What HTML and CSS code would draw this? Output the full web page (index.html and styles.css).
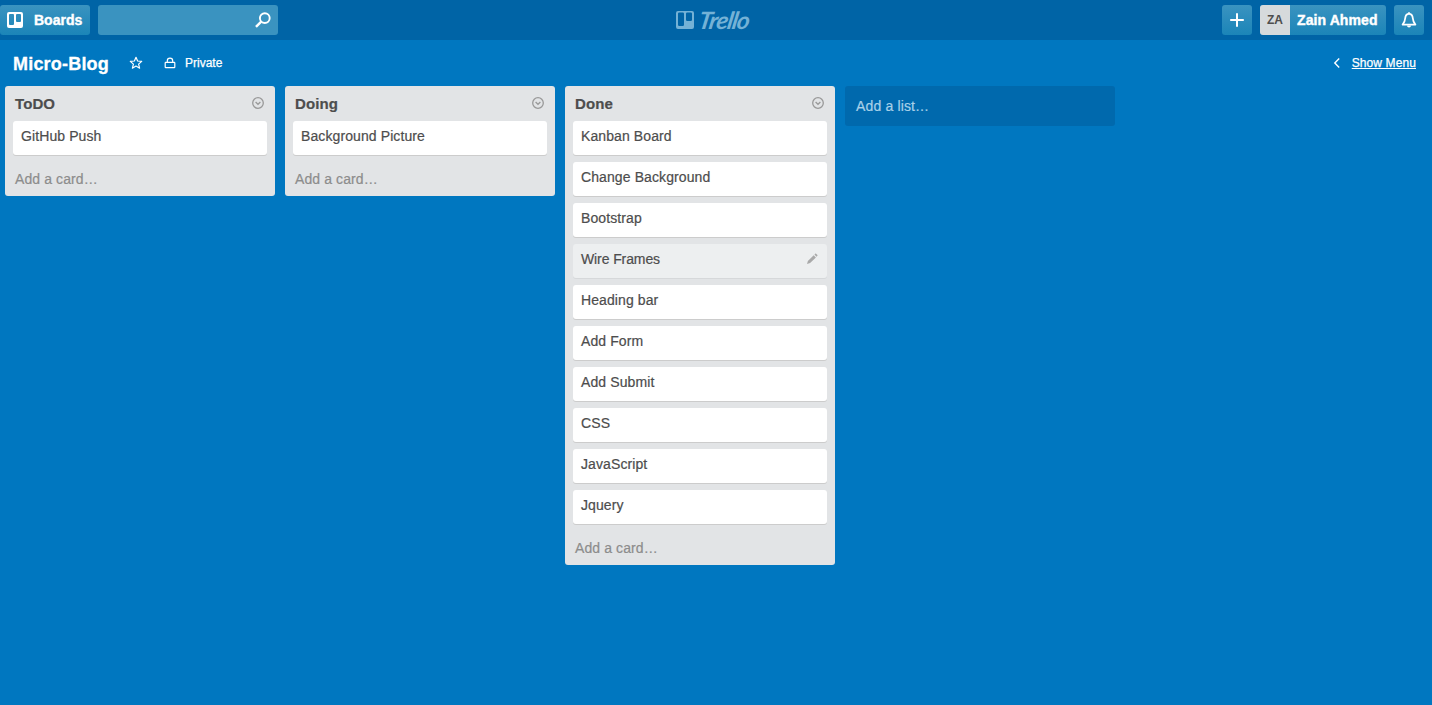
FILE: index.html
```html
<!DOCTYPE html>
<html lang="en">
<head>
<meta charset="utf-8">
<title>Micro-Blog | Trello</title>
<link rel="stylesheet" href="styles.css">
</head>
<body>
<header class="header">
  <div class="header-side">
    <a class="btn boards-btn">
      <svg width="16" height="16" viewBox="0 0 16 16"><path fill="#fff" fill-rule="evenodd" d="M2 0h12a2 2 0 0 1 2 2v12a2 2 0 0 1-2 2H2a2 2 0 0 1-2-2V2a2 2 0 0 1 2-2zM3 2a1 1 0 0 0-1 1v9a1 1 0 0 0 1 1h3a1 1 0 0 0 1-1V3a1 1 0 0 0-1-1zM10 2a1 1 0 0 0-1 1v6a1 1 0 0 0 1 1h3a1 1 0 0 0 1-1V3a1 1 0 0 0-1-1z"/></svg>
      <span class="boards-label">Boards</span>
    </a>
    <div class="search">
      <svg width="16" height="16" viewBox="0 0 16 16" fill="none" stroke="#fff"><circle cx="9.8" cy="6.1" r="4.9" stroke-width="1.9"/><path d="M6.2 9.7L1 14.9" stroke-width="2.4"/></svg>
    </div>
  </div>
  <a class="logo">
    <svg width="18" height="18" viewBox="0 0 18 18"><path fill="#74b2d6" fill-rule="evenodd" d="M2 0h14a2 2 0 0 1 2 2v14a2 2 0 0 1-2 2H2a2 2 0 0 1-2-2V2a2 2 0 0 1 2-2zM3.2 1.5a1.2 1.2 0 0 0-1.2 1.2v11.1a1.2 1.2 0 0 0 1.2 1.2h3.6a1.2 1.2 0 0 0 1.2-1.2V2.7a1.2 1.2 0 0 0-1.2-1.2zM11.2 1.5a1.2 1.2 0 0 0-1.2 1.2v6.1a1.2 1.2 0 0 0 1.2 1.2h3.6a1.2 1.2 0 0 0 1.2-1.2V2.7a1.2 1.2 0 0 0-1.2-1.2z"/></svg>
    <span class="logo-text">Trello</span>
  </a>
  <div class="header-side header-right">
    <a class="btn icon-btn"><svg width="14" height="14" viewBox="0 0 14 14" stroke="#fff" stroke-width="2"><path d="M7 .2v13.6M.2 7h13.6"/></svg></a>
    <a class="btn member"><span class="avatar">ZA</span><span class="member-name">Zain Ahmed</span></a>
    <a class="btn icon-btn"><svg width="16" height="18" viewBox="0 0 16 18" fill="none" stroke="#fff" stroke-width="1.8"><path d="M8 2.8C5.3 2.8 4.4 4.8 4.2 7.3C4 10 3.2 11.8 1.6 13.6h12.8C12.8 11.8 12 10 11.8 7.3C11.6 4.8 10.7 2.8 8 2.8z" stroke-linejoin="round"/><path d="M8 1.2v1.6"/><path d="M6 14.6h4a2 1.9 0 0 1-4 0z" fill="#fff" stroke="none"/></svg></a>
  </div>
</header>
<nav class="board-header">
  <h1 class="board-name">Micro-Blog</h1>
  <svg class="star" width="14" height="14" viewBox="0 0 14 14" fill="none" stroke="#fff" stroke-width="1.2" stroke-linejoin="round"><path d="M7 1.3l1.6 3.7 4.1.4-3.1 2.7 1 4.1L7 10.1l-3.6 2.1 1-4.1-3.1-2.7 4.1-.4z"/></svg>
  <svg class="lock" width="12" height="12" viewBox="0 0 12 12" fill="none" stroke="#fff" stroke-width="1.2"><rect x="1.2" y="5.3" width="9.6" height="5.3" rx=".6"/><path d="M3.3 5.3V3.9a2.7 2.7 0 0 1 5.4 0v1.4"/></svg>
  <span class="private">Private</span>
  <svg class="back" width="8" height="10" viewBox="0 0 8 10" fill="none" stroke="#fff" stroke-width="1.4"><path d="M6.2.6L1.8 5l4.4 4.4"/></svg>
  <a class="show-menu">Show Menu</a>
</nav>
<main class="board">
  <section class="list">
    <div class="list-head"><h2 class="list-name">ToDO</h2><svg class="list-menu" width="12" height="12" viewBox="0 0 12 12"><circle cx="6" cy="6" r="5.3"/><path d="M3.6 5.1L6 7.3l2.4-2.2"/></svg></div>
    <div class="card">GitHub Push</div>
    <a class="add-card">Add a card…</a>
  </section>
  <section class="list">
    <div class="list-head"><h2 class="list-name">Doing</h2><svg class="list-menu" width="12" height="12" viewBox="0 0 12 12"><circle cx="6" cy="6" r="5.3"/><path d="M3.6 5.1L6 7.3l2.4-2.2"/></svg></div>
    <div class="card">Background Picture</div>
    <a class="add-card">Add a card…</a>
  </section>
  <section class="list">
    <div class="list-head"><h2 class="list-name">Done</h2><svg class="list-menu" width="12" height="12" viewBox="0 0 12 12"><circle cx="6" cy="6" r="5.3"/><path d="M3.6 5.1L6 7.3l2.4-2.2"/></svg></div>
    <div class="card">Kanban Board</div>
    <div class="card">Change Background</div>
    <div class="card">Bootstrap</div>
    <div class="card card-active"><span class="wire">Wire Frames</span><svg class="pencil" width="12" height="12" viewBox="0 0 12 12" fill="#a9a9a9"><path d="M1 11l.9-3.1 5.8-5.7 2.2 2.2-5.8 5.7zM8.4 1.6l.7-.7c.4-.4.8-.4 1.2 0l.9.9c.4.4.4.8 0 1.2l-.7.7z"/></svg></div>
    <div class="card">Heading bar</div>
    <div class="card">Add Form</div>
    <div class="card">Add Submit</div>
    <div class="card">CSS</div>
    <div class="card">JavaScript</div>
    <div class="card">Jquery</div>
    <a class="add-card">Add a card…</a>
  </section>
  <div class="add-list">Add a list…</div>
</main>
</body>
</html>
```
FILE: styles.css
```css
* { box-sizing: border-box; }
body {
  margin: 0;
  min-height: 705px;
  background: #0077c0;
  color: #4d4d4d;
  font: 14px/18px "Liberation Sans", Arial, sans-serif;
}
svg { display: block; flex: none; }
h1, h2 { margin: 0; }
.header {
  display: flex;
  align-items: flex-start;
  height: 40px;
  padding-top: 5px;
  background: #0064a6;
}
.header-side { display: flex; flex: 1; gap: 8px; }
.header-right { justify-content: flex-end; padding-right: 8px; }
.btn {
  display: flex;
  align-items: center;
  height: 30px;
  border-radius: 3px;
  background: linear-gradient(#3a93c0, #1b85b8);
  color: #fff;
  font-weight: bold;
}
.boards-btn { width: 90px; padding-left: 7px; gap: 11px; }
.boards-label, .member-name { -webkit-text-stroke: .4px #fff; }
.member-name { letter-spacing: .1px; }
.search {
  display: flex;
  align-items: center;
  justify-content: flex-end;
  width: 180px;
  height: 30px;
  padding-right: 7px;
  border-radius: 3px;
  background: #3a93c0;
}
.logo { display: flex; align-items: center; gap: 4px; width: 73px; height: 30px; color: #74b2d6; }
.logo-text {
  width: 51px;
  font: italic bold 24px/30px Lato, sans-serif;
  letter-spacing: -1px;
  white-space: nowrap;
  transform: translateX(1px) scaleX(1.02) skewX(-10deg);
  transform-origin: 0 50%;
}
.icon-btn { width: 30px; justify-content: center; }
.member { width: 126px; gap: 7px; overflow: hidden; }
.avatar { width: 30px; height: 30px; background: #d6dadc; color: #4d4d4d; font-size: 12px; line-height: 30px; text-align: center; }
.board-header { display: flex; align-items: center; height: 46px; padding: 0 16px 0 13px; color: #fff; font-size: 12px; }
.board-name { width: 116px; font-size: 18px; line-height: 24px; letter-spacing: .2px; padding-top: 1px; -webkit-text-stroke: .3px #fff; }
.lock { margin-left: 21px; }
.private { margin-left: 9px; -webkit-text-stroke: .25px #fff; }
.back { margin-left: auto; }
.show-menu { margin-left: 11px; letter-spacing: .1px; text-decoration: underline; -webkit-text-stroke: .25px #fff; }
.board { display: flex; align-items: flex-start; gap: 10px; padding: 0 5px; }
.list { display: flex; flex-direction: column; width: 270px; padding: 0 8px 8px; border-radius: 3px; background: #e2e4e6; }
.list-head { display: flex; justify-content: space-between; height: 35px; padding: 9px 3px 0 2px; }
.list-name { font-size: 15px; line-height: 18px; -webkit-text-stroke: .2px #4d4d4d; letter-spacing: .1px; }
.list-menu { margin-top: 2px; fill: none; stroke: #999; stroke-width: 1.3; }
.card {
  display: flex;
  justify-content: space-between;
  height: 34px;
  margin-bottom: 7px;
  padding: 6px 9px 0 8px;
  border-radius: 3px;
  background: #fff;
  box-shadow: 0 1px 0 #ccc;
  letter-spacing: .1px;
  -webkit-text-stroke: .2px #4d4d4d;
}
.card-active { background: #edeff0; box-shadow: 0 1px 0 #d6d8da; }
.wire { letter-spacing: -.1px; }
.pencil { margin-top: 3px; }
.add-card { height: 26px; padding: 8px 2px 0; color: #8c8c8c; letter-spacing: .1px; -webkit-text-stroke: .2px #8c8c8c; }
.add-list { width: 270px; height: 40px; padding: 11px; border-radius: 3px; background: #0069ad; color: #a8d0e8; letter-spacing: .15px; -webkit-text-stroke: .2px #a8d0e8; }
```
